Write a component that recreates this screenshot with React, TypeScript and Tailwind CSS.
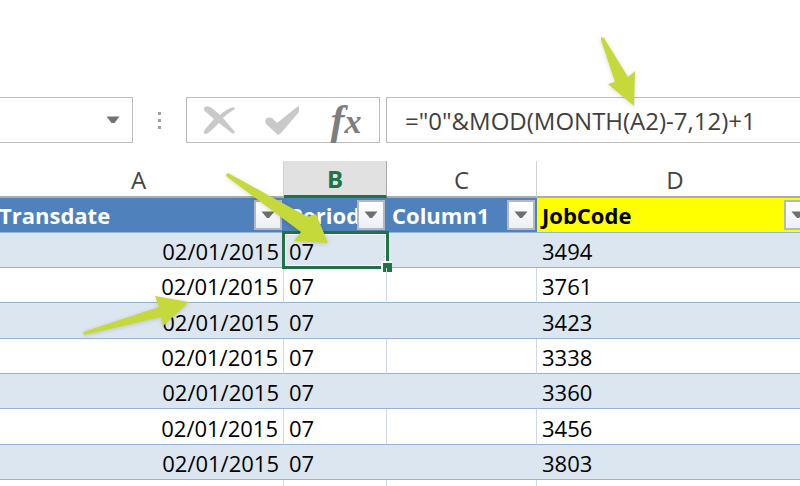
import React from "react";

const rows = [
  { date: "02/01/2015", period: "07", column1: "", jobCode: "3494" },
  { date: "02/01/2015", period: "07", column1: "", jobCode: "3761" },
  { date: "02/01/2015", period: "07", column1: "", jobCode: "3423" },
  { date: "02/01/2015", period: "07", column1: "", jobCode: "3338" },
  { date: "02/01/2015", period: "07", column1: "", jobCode: "3360" },
  { date: "02/01/2015", period: "07", column1: "", jobCode: "3456" },
  { date: "02/01/2015", period: "07", column1: "", jobCode: "3803" },
];

const columns = [
  { letter: "A", title: "Transdate", style: "bg-[#4f81bd] text-white" },
  { letter: "B", title: "Period", style: "bg-[#4f81bd] text-white" },
  { letter: "C", title: "Column1", style: "bg-[#4f81bd] text-white" },
  { letter: "D", title: "JobCode", style: "bg-[#ffff00] text-black" },
];

const FilterButton = ({ title }: { title: string }) => (
  <button
    type="button"
    aria-label={`Filter ${title}`}
    className="flex h-[30px] w-7 shrink-0 items-center justify-center border-2 border-[#b3b8c4] bg-linear-to-b from-white to-[#eceff5]"
  >
    <svg viewBox="0 0 14 8" className="h-2 w-3.5" aria-hidden="true">
      <path d="M0.5 0.5H13.5L8 7H6Z" fill="#6e6e6e" />
    </svg>
  </button>
);

const FormulaBar = () => (
  <div className="flex h-[46px] items-stretch">
    <div className="flex w-[133px] shrink-0 items-center border border-l-0 border-[#bdbdbd] bg-white pr-3">
      <input
        aria-label="Name box"
        className="min-w-0 flex-1 px-2 outline-none"
      />
      <button type="button" aria-label="Show names">
        <svg viewBox="0 0 14 8" className="h-2 w-3.5" aria-hidden="true">
          <path d="M0.5 0.5H13.5L8.5 7H5.5Z" fill="#737373" />
        </svg>
      </button>
    </div>

    <div className="flex w-[53px] shrink-0 flex-col items-center justify-center gap-1">
      <span className="size-[3px] bg-[#a0a0a0]"></span>
      <span className="size-[3px] bg-[#a0a0a0]"></span>
      <span className="size-[3px] bg-[#a0a0a0]"></span>
    </div>

    <div className="flex w-[194px] shrink-0 items-center justify-between border border-[#bdbdbd] bg-white pr-4 pl-4">
      <button type="button" aria-label="Cancel">
        <svg viewBox="0 0 32 30" className="h-[30px] w-8" aria-hidden="true">
          <path
            d="M2 2C4 0 8 2 10 4L17 10C21 6 26 3 31 2L32 4C27 7 23 10 20 13L32 27L30 29L16 18C12 22 8 26 5 28C3 30 0 29 1 26C4 21 8 18 11 14L4 8C1 6 0 4 2 2Z"
            fill="#c9c9c9"
          />
        </svg>
      </button>
      <button type="button" aria-label="Enter">
        <svg viewBox="0 0 34 30" className="h-[30px] w-[34px]" aria-hidden="true">
          <path
            d="M1 14C3 12 7 12 9 15L12 18L32 2L34 1V7C28 14 22 21 16 28C14 30 12 30 11 28L2 20C0 18 0 16 1 14Z"
            fill="#c9c9c9"
          />
        </svg>
      </button>
      <button
        type="button"
        aria-label="Insert function"
        className="flex h-10 w-[34px] items-center justify-center font-['Liberation_Serif',serif] font-bold text-[#7d7d7d] italic"
      >
        <span className="text-[42px] leading-10">f</span>
        <span className="pt-1 text-[34px] leading-10">x</span>
      </button>
    </div>

    <input
      aria-label="Formula"
      defaultValue={'="0"&MOD(MONTH(A2)-7,12)+1'}
      className="ml-1.5 min-w-0 flex-1 border border-r-0 border-[#bdbdbd] bg-white pt-0.5 pl-[18px] text-2xl text-[#3f3f3f] outline-none"
    />
  </div>
);

const Sheet = () => (
  <table className="-ml-1.5 w-[calc(100%+20px)] table-fixed border-separate border-spacing-0 text-[22px] leading-6 text-black">
    <colgroup>
      <col className="w-[290px]" />
      <col className="w-[103px]" />
      <col className="w-[150px]" />
      <col />
    </colgroup>
    <thead>
      <tr className="h-[37px]">
        {columns.map(({ letter }) => (
          <th
            key={letter}
            scope="col"
            className={
              letter === "B"
                ? "border-r border-b-3 border-r-[#ababab] border-b-[#217346] bg-[#e1e1e1] p-0 pt-0.5 text-2xl font-bold text-[#217346]"
                : "border-r border-b-2 border-r-[#d0d0d0] border-b-[#ababab] p-0 pt-0.5 text-2xl font-normal text-[#444444]"
            }
          >
            {letter}
          </th>
        ))}
      </tr>
      <tr className="h-[35px]">
        {columns.map(({ title, style }) => (
          <th
            key={title}
            scope="col"
            className={`border-b border-[#95b3d7] p-0 text-left font-bold ${style}`}
          >
            <div className="flex items-center pr-0.5 pl-[5px]">
              <span className="min-w-0 flex-1 leading-[30px]">{title}</span>
              <FilterButton title={title} />
            </div>
          </th>
        ))}
      </tr>
    </thead>
    <tbody className="[&_td]:border-b [&_td]:border-b-[#95b3d7] [&_td]:px-[5px] [&_td]:pt-0.5 [&_td]:pb-0">
      {rows.map((row, index) => (
        <tr
          key={row.jobCode}
          className="h-[35px] nth-[3n]:h-9 odd:bg-[#dce6f1] even:[&>td]:border-r even:[&>td]:border-r-[#d0d7e5]"
        >
          <td className="text-right">{row.date}</td>
          <td className="relative">
            {row.period}
            {index === 0 && (
              <div className="pointer-events-none absolute -top-0.5 -right-0.5 -bottom-0.5 -left-0.5 border-3 border-[#217346] ring-1 ring-white ring-inset">
                <span className="absolute -right-1.5 -bottom-1.5 size-[11px] border-2 border-r-0 border-b-0 border-white bg-[#217346]"></span>
              </div>
            )}
          </td>
          <td>{row.column1}</td>
          <td>{row.jobCode}</td>
        </tr>
      ))}
      <tr className="h-[35px] [&>td]:border-r [&>td]:border-r-[#d0d7e5]">
        <td></td>
        <td></td>
        <td></td>
        <td></td>
      </tr>
    </tbody>
  </table>
);

const App = () => {
  return (
    <main className="relative h-screen overflow-hidden bg-white pt-[97px] font-['Open_Sans',sans-serif]">
      <FormulaBar />
      <div className="pt-[18px]">
        <Sheet />
      </div>

      {/* Callout arrows on top of the sheet */}
      <svg
        viewBox="0 0 800 486"
        className="pointer-events-none absolute top-0 left-0 h-[486px] w-[800px] drop-shadow-sm"
        fill="#c5d93a"
        aria-hidden="true"
      >
        <path d="M601 37L604 38L628 77L635 71L634 106L608 84L615 82L601 40Z" />
        <path d="M226 175L228 173L308 217L316 214L328 243L294 241L301 232L226 176Z" />
        <path d="M83 332L159 307L155 296L189 302L163 326L161 317L84 335Z" />
      </svg>
    </main>
  );
};

export default App;
